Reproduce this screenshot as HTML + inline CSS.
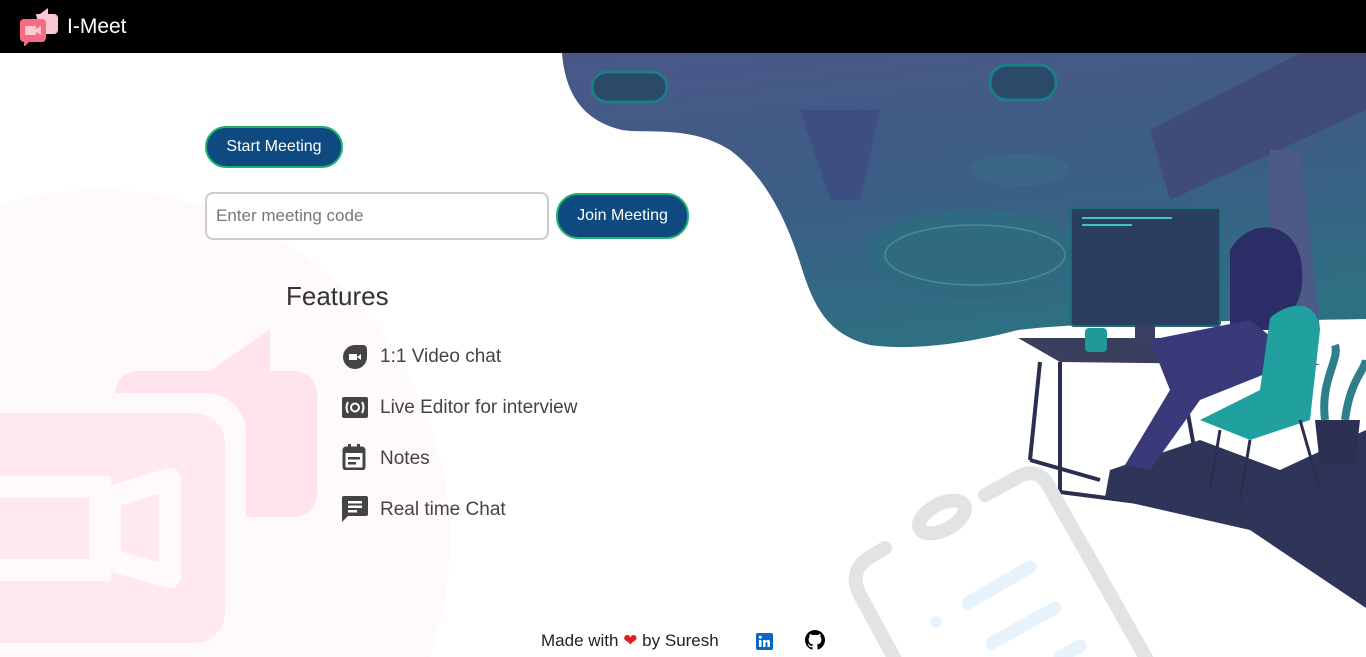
<!DOCTYPE html>
<html><head><meta charset="utf-8"><style>
*{margin:0;padding:0;box-sizing:border-box}
html,body{width:1366px;height:657px;overflow:hidden}
body{background:#fff;font-family:"Segoe UI","Liberation Sans",sans-serif;position:relative}
.nav{position:absolute;left:0;top:0;width:1366px;height:53px;background:#000}
.nav .t{position:absolute;left:67px;top:15px;color:#fff;font-size:21px}
.btn{position:absolute;background:#0e4a80;border:2px solid #1fb36a;border-radius:22px;color:#fff;font-size:16px;text-align:center}
.inp{position:absolute;left:205px;top:192px;width:344px;height:48px;border:2px solid #ccc;border-radius:8px;color:#777;font-size:17px;padding:12px 9px;background:#fff}
h2{position:absolute;left:286px;top:281px;font-size:26px;font-weight:400;color:#333}
.it{position:absolute;left:380px;font-size:19px;color:#444}
.ic{position:absolute;left:342px}
.foot{position:absolute;left:541px;top:631px;font-size:17px;color:#222}
</style></head><body>
<svg width="1366" height="657" style="position:absolute;left:0;top:0">
<defs>
<linearGradient id="g" x1="0" y1="0" x2="0.3" y2="1"><stop offset="0" stop-color="#4a5788"/><stop offset="0.6" stop-color="#3a5f85"/><stop offset="1" stop-color="#2f6f82"/></linearGradient>
</defs>
<circle cx="100" cy="540" r="350" fill="#fefafa"/>
<path d="M210 371 L270 329 L270 371 Z" fill="#ffe5eb"/>
<rect x="115" y="371" width="202" height="146" rx="22" fill="#ffe5eb"/>
<rect x="-30" y="393" width="276" height="270" rx="40" fill="#fffafa"/>
<rect x="-30" y="413" width="255" height="230" rx="30" fill="#ffe9ee"/>
<path d="M-20 487 H100 V570 H-20 Z" fill="none" stroke="#fffafa" stroke-width="22"/>
<path d="M110 497 L170 479 V577 L110 560 Z" fill="none" stroke="#fffafa" stroke-width="22" stroke-linejoin="round"/>
<path d="M562 53 C565 90 580 120 622 130 C650 134 690 125 730 150 C770 180 790 230 802 269 C815 310 830 335 870 345 C920 352 980 340 1018 330 C1080 322 1200 322 1366 319 V53 Z" fill="url(#g)"/>
<rect x="592" y="72" width="75" height="30" rx="15" fill="#2b4a6a" stroke="#1a7f86" stroke-width="3"/>
<rect x="990" y="65" width="66" height="35" rx="17" fill="#2b4a6a" stroke="#1a7f86" stroke-width="3"/>
<path d="M1150 130 L1300 53 L1366 53 L1366 110 L1170 200 Z" fill="#414b78"/>
<ellipse cx="975" cy="255" rx="110" ry="45" fill="#2f6a80"/>
<ellipse cx="975" cy="255" rx="90" ry="30" fill="none" stroke="#4a8a9a" stroke-width="1.5"/>
<ellipse cx="1020" cy="170" rx="50" ry="16" fill="#3c6686"/>
<path d="M800 110 L880 110 L860 200 L830 200 Z" fill="#3d4f80"/>
<path d="M1270 150 L1300 150 L1320 330 L1270 330 Z" fill="#4d5a88"/>
<rect x="1071" y="208" width="149" height="118" rx="3" fill="#2a3e60" stroke="#1d6c7c" stroke-width="2"/>
<rect x="1082" y="217" width="90" height="2" fill="#3fc6c0"/>
<rect x="1082" y="224" width="50" height="2" fill="#3fc6c0"/>
<rect x="1135" y="325" width="20" height="15" fill="#3a3f63"/>
<path d="M1018 338 L1250 338 L1320 365 L1060 362 Z" fill="#3b3f5e"/>
<path d="M1040 362 L1030 460 M1060 362 L1060 492 M1180 370 L1200 480 M1030 460 L1100 480 M1060 492 L1200 510" stroke="#2a2f50" stroke-width="4" fill="none"/>
<rect x="1085" y="328" width="22" height="24" rx="4" fill="#21999a"/>
<path d="M1110 470 L1200 440 L1280 470 L1366 430 V608 L1250 530 L1105 497 Z" fill="#2f3558"/>
<path d="M1230 250 C1250 215 1300 220 1302 270 C1305 300 1290 320 1270 330 L1230 330 Z" fill="#2b2e66"/>
<path d="M1150 340 L1250 320 L1300 360 L1200 400 L1150 470 L1125 465 L1170 390 Z" fill="#3a3a7a"/>
<path d="M1270 318 C1290 300 1318 300 1320 330 L1310 420 L1250 440 L1200 420 L1260 390 Z" fill="#21a0a0"/>
<path d="M1220 430 L1210 490 M1250 440 L1240 500 M1300 420 L1320 490" stroke="#2a2f50" stroke-width="3"/>
<path d="M1315 420 L1360 420 L1355 465 L1320 465 Z" fill="#2b3050"/>
<path d="M1325 420 C1320 380 1340 360 1335 345 M1345 420 C1350 380 1365 370 1366 360" stroke="#2e7f8a" stroke-width="8" fill="none"/>
<g fill="none" stroke="#e2e3e5" stroke-width="14" stroke-linecap="round">
<path d="M885 548 L870 557 C855 566 852 580 860 595 L898 665"/>
<path d="M985 495 L1020 476 C1032 470 1042 474 1048 485 L1150 665"/>
<ellipse cx="942" cy="517" rx="25" ry="13" transform="rotate(-28 942 517)"/>
</g>
<g stroke="#e6f3fd" stroke-width="13" stroke-linecap="round">
<path d="M968 603 L1030 567"/><path d="M992 643 L1055 608"/><path d="M1060 657 L1080 646"/>
</g>
<circle cx="936" cy="622" r="6" fill="#e6f3fd"/>
</svg>
<div class="nav">
<svg width="44" height="40" style="position:absolute;left:18px;top:6px">
<path d="M22 8 L30 2 L30 8 Z M18 8 H36 A4 4 0 0 1 40 12 V24 A4 4 0 0 1 36 28 H22 Z" fill="#f9c8d3"/>
<rect x="2" y="13" width="26" height="23" rx="4" fill="#f76b85"/>
<path d="M6 36 L6 41 L11 36 Z" fill="#f76b85"/>
<rect x="7" y="20" width="11" height="9" rx="1" fill="#fcc"/><path d="M18 23 L23 20 V29 L18 26 Z" fill="#fcc"/>
</svg>
<div class="t">I-Meet</div></div>
<div class="btn" style="left:205px;top:126px;width:138px;height:42px;line-height:38px">Start Meeting</div>
<div class="inp">Enter meeting code</div>
<div class="btn" style="left:556px;top:193px;width:133px;height:46px;line-height:42px">Join Meeting</div>
<h2>Features</h2>
<svg class="ic" style="top:344px" width="26" height="26" viewBox="0 0 26 26"><path d="M13 1 H21 A4 4 0 0 1 25 5 V13 A12 12 0 1 1 13 1 Z" fill="#444"/><rect x="7" y="10" width="8" height="6" fill="#fff"/><path d="M15 13 L19 10 V16 Z" fill="#fff"/></svg>
<div class="it" style="top:346px">1:1 Video chat</div>
<svg class="ic" style="top:397px" width="26" height="22" viewBox="0 0 26 22"><rect x="0" y="0" width="26" height="21" rx="2" fill="#444"/><circle cx="13" cy="10.5" r="4" fill="none" stroke="#fff" stroke-width="2"/><path d="M6 5 Q3 10.5 6 16 M20 5 Q23 10.5 20 16" stroke="#fff" stroke-width="2" fill="none"/></svg>
<div class="it" style="top:397px">Live Editor for interview</div>
<svg class="ic" style="top:444px" width="24" height="26" viewBox="0 0 24 26"><rect x="2" y="4" width="20" height="21" rx="2" fill="none" stroke="#444" stroke-width="3"/><rect x="2" y="4" width="20" height="5" fill="#444"/><rect x="6" y="0" width="3" height="5" fill="#444"/><rect x="15" y="0" width="3" height="5" fill="#444"/><rect x="6" y="13" width="12" height="2.5" fill="#444"/><rect x="6" y="18" width="8" height="2.5" fill="#444"/></svg>
<div class="it" style="top:448px">Notes</div>
<svg class="ic" style="top:496px" width="26" height="26" viewBox="0 0 26 26"><path d="M2 0 H24 A2 2 0 0 1 26 2 V18 A2 2 0 0 1 24 20 H6 L0 26 V2 A2 2 0 0 1 2 0 Z" fill="#444"/><rect x="6" y="5" width="14" height="2.5" fill="#fff"/><rect x="6" y="9.5" width="14" height="2.5" fill="#fff"/><rect x="6" y="14" width="9" height="2.5" fill="#fff"/></svg>
<div class="it" style="top:499px">Real time Chat</div>
<div class="foot">Made with <span style="color:#e31b23">&#10084;</span> by Suresh</div>
<svg style="position:absolute;left:756px;top:633px" width="17" height="17"><rect width="17" height="17" rx="2" fill="#0a66c2"/><rect x="3" y="7" width="2.5" height="7" fill="#fff"/><circle cx="4.2" cy="4.2" r="1.5" fill="#fff"/><path d="M7 7 H9.5 V8 Q11 6.5 13 7 Q14 7.5 14 10 V14 H11.5 V10.5 Q11.5 9 10.3 9 Q9.5 9 9.5 10.5 V14 H7 Z" fill="#fff"/></svg>
<svg style="position:absolute;left:805px;top:630px" width="20" height="20" viewBox="0 0 16 16"><path d="M8 0C3.58 0 0 3.580 0 8c0 3.54 2.290 6.530 5.470 7.590.4.07.55-.17.55-.38 0-.19-.01-.82-.01-1.490-2.010.37-2.530-.49-2.690-.94-.09-.23-.48-.94-.82-1.130-.28-.15-.68-.52-.01-.53.63-.01 1.080.58 1.230.82.72 1.210 1.870.87 2.330.66.07-.52.28-.87.51-1.070-1.780-.2-3.640-.89-3.640-3.950 0-.87.31-1.590.82-2.150-.08-.2-.36-1.020.08-2.120 0 0 .67-.21 2.200.82.64-.18 1.320-.27 2-.27.68 0 1.360.09 2 .27 1.530-1.040 2.200-.82 2.200-.82.44 1.100.16 1.920.08 2.120.51.56.82 1.270.82 2.150 0 3.070-1.870 3.750-3.650 3.950.29.25.54.73.54 1.480 0 1.070-.01 1.930-.01 2.200 0 .21.15.46.55.38A8.013 8.013 0 0016 8c0-4.420-3.580-8-8-8z" fill="#000"/></svg>
</body></html>
